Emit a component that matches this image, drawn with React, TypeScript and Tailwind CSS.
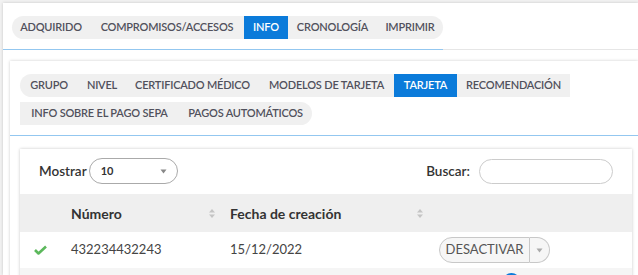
import React from "react";

const font = { fontFamily: "Lato, 'Open Sans', sans-serif" };

function Tab({ label, w, active, first, last }: { label: string; w: number; active?: boolean; first?: boolean; last?: boolean }) {
  return (
    <li
      style={{ width: w }}
      className={
        "flex h-[23px] items-center justify-center whitespace-nowrap text-[11px] font-semibold uppercase tracking-[-0.2px] " +
        (active ? "bg-[#0b7bda] text-white " : "bg-[#f0f0f0] text-[#51515c] ") +
        (first ? "rounded-l-full " : "") +
        (last ? "rounded-r-full " : "")
      }
    >
      {label}
    </li>
  );
}

function SortIcon() {
  return (
    <svg width="8" height="11" viewBox="0 0 8 11" className="inline-block">
      <path d="M4 1 L7 4.5 H1 Z" fill="#c4c4c4" />
      <path d="M4 10 L7 6.5 H1 Z" fill="#c4c4c4" />
    </svg>
  );
}

export default function App() {
  return (
    <div className="h-[275px] w-[638px] overflow-hidden bg-[#f2f2f2] pl-[3px] pt-[3px]" style={font}>
      <div className="h-full bg-white shadow-[0_0_3px_rgba(0,0,0,0.18)]">
        {/* top tabs */}
        <div className="border-b border-[#e6e6e6]">
          <div className="-mb-px w-fit border-b border-[#93c7f0] pb-[10px] pl-[9px] pt-[13px]">
            <ul className="flex">
              <Tab label="Adquirido" w={78} first />
              <Tab label="Compromisos/Accesos" w={154} />
              <Tab label="Info" w={44} active />
              <Tab label="Cronología" w={89} />
              <Tab label="Imprimir" w={66} last />
            </ul>
          </div>
        </div>
        {/* inner panel */}
        <div className="ml-[7px] mt-[11px] h-[300px] bg-white shadow-[0_0_3px_rgba(0,0,0,0.2)]">
          <div className="border-b border-[#93c7f0] pb-[10px] pl-[10px] pt-[13px]">
            <ul className="flex w-[560px] flex-wrap gap-y-[5px]">
              <Tab label="Grupo" w={58} first />
              <Tab label="Nivel" w={48} />
              <Tab label="Certificado médico" w={133} />
              <Tab label="Modelos de tarjeta" w={135} />
              <Tab label="Tarjeta" w={63} active />
              <Tab label="Recomendación" w={113} />
              <Tab label="Info sobre el pago SEPA" w={159} />
              <Tab label="Pagos automáticos" w={133} last />
            </ul>
          </div>
          <div className="ml-[10px] mt-[13px] w-[612px] bg-white shadow-[0_0_3px_rgba(0,0,0,0.22)]">
            <div className="flex items-center justify-between pb-[10px] pl-[19px] pr-[19px] pt-[9px]">
              <div className="flex items-center gap-[2px]">
                <span className="text-[13.5px] font-semibold text-[#333]">Mostrar</span>
                <div className="flex h-[26px] w-[89px] items-center justify-between rounded-full border border-[#aaa] pl-[11px] pr-[10px]">
                  <span className="text-[11px] font-bold text-[#333]">10</span>
                  <svg width="7" height="5" viewBox="0 0 7 5">
                    <path d="M0.5 0.5 H6.5 L3.5 4.5 Z" fill="#888" />
                  </svg>
                </div>
              </div>
              <div className="flex items-center gap-[9px]">
                <span className="text-[13.5px] font-semibold text-[#333]">Buscar:</span>
                <div className="h-[25px] w-[134px] rounded-full border border-[#ccc]" />
              </div>
            </div>
            <table className="w-full border-collapse">
              <thead>
                <tr className="h-[38px] bg-[#efefef]">
                  <th className="w-[51px]" />
                  <th className="w-[159px] pr-[14px] text-left text-[14px] font-bold text-[#333]">
                    <div className="flex items-center justify-between">
                      <span>Número</span>
                      <SortIcon />
                    </div>
                  </th>
                  <th className="w-[203px] pl-[0px] pr-[9px] text-left text-[14px] font-bold text-[#333]">
                    <div className="flex items-center justify-between">
                      <span>Fecha de creación</span>
                      <SortIcon />
                    </div>
                  </th>
                  <th />
                </tr>
              </thead>
              <tbody>
                <tr className="h-[36px] bg-white">
                  <td className="pl-[14px]">
                    <svg width="13" height="10" viewBox="0 0 13 10">
                      <path d="M1 5 L4.5 8.5 L12 1.5" stroke="#5cb85c" strokeWidth="2.6" fill="none" strokeLinejoin="round" />
                    </svg>
                  </td>
                  <td className="text-[13px] text-[#444]">432234432243</td>
                  <td className="text-[13px] text-[#444]">15/12/2022</td>
                  <td>
                    <div className="ml-[6px] flex h-[26px] w-[111px] items-stretch">
                      <div className="flex flex-1 items-center justify-center rounded-l-full border border-[#c8c8c8] bg-[#f6f6f6] text-[13px] text-[#555]">
                        DESACTIVAR
                      </div>
                      <div className="flex w-[20px] items-center justify-center rounded-r-full border border-l-0 border-[#c8c8c8] bg-[#f6f6f6]">
                        <svg width="7" height="5" viewBox="0 0 7 5">
                          <path d="M0.5 0.5 H6.5 L3.5 4.5 Z" fill="#aaa" />
                        </svg>
                      </div>
                    </div>
                  </td>
                </tr>
                <tr className="h-[35px] bg-[#f5f5f5]">
                  <td />
                  <td />
                  <td />
                  <td className="align-top">
                    <div className="ml-[70px] mt-[5px] h-[17px] w-[17px] rounded-full bg-[#0b7bda]" />
                  </td>
                </tr>
              </tbody>
            </table>
          </div>
        </div>
      </div>
    </div>
  );
}
